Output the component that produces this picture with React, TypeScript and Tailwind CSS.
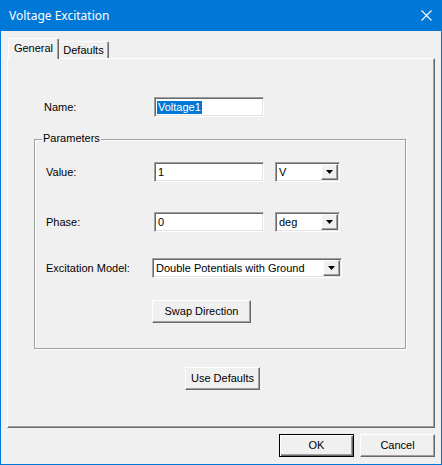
import React from "react";

const ui = "font-['Liberation_Sans',Arial,sans-serif] text-[11px] leading-[13px] text-black";

// sunken 3D edit box (classic windows look)
function Field({ width, children }: { width: string; children?: React.ReactNode }) {
  return (
    <div
      className={`${width} h-[20px] flex items-stretch p-[1px] bg-white border border-t-[#a0a0a0] border-l-[#a0a0a0] border-r-white border-b-white shadow-[inset_1px_1px_0_#696969,inset_-1px_-1px_0_#e3e3e3]`}
    >
      {children}
    </div>
  );
}

function Combo({ width, value }: { width: string; value: string }) {
  return (
    <Field width={width}>
      <div className="flex-1 flex items-center pl-[2px] whitespace-nowrap overflow-hidden">{value}</div>
      <div className="w-[17px] flex items-center justify-center bg-[#f0f0f0] border border-t-white border-l-white border-r-[#696969] border-b-[#696969] shadow-[inset_-1px_-1px_0_#a0a0a0]">
        <svg width="7" height="4" viewBox="0 0 7 4">
          <path d="M0 0h7L3.5 4z" fill="#000" />
        </svg>
      </div>
    </Field>
  );
}

function Button({ width, label, isDefault }: { width: string; label: string; isDefault?: boolean }) {
  const edge = isDefault
    ? "border border-black shadow-[inset_1px_1px_0_white,inset_-1px_-1px_0_#696969,inset_-2px_-2px_0_#a0a0a0]"
    : "border border-t-white border-l-white border-r-[#696969] border-b-[#696969] shadow-[inset_-1px_-1px_0_#a0a0a0]";
  return (
    <div className={`${width} h-[23px] flex items-center justify-center bg-[#f0f0f0] ${edge}`}>
      {label}
    </div>
  );
}

export default function App() {
  return (
    <div className={`w-[442px] h-[465px] flex flex-col bg-[#f0f0f0] border-x border-b border-[#0078d7] ${ui}`}>
      {/* title bar */}
      <div className="h-[31px] shrink-0 flex items-center justify-between bg-[#0078d7] pl-[8px] pr-[9px] text-white">
        <span className="font-['Noto_Sans',sans-serif] text-[12px] leading-[16px]">Voltage Excitation</span>
        <svg width="11" height="11" viewBox="0 0 11 11">
          <path d="M0.5 0.5L10.5 10.5M10.5 0.5L0.5 10.5" stroke="#fff" strokeWidth="1.1" />
        </svg>
      </div>

      <div className="px-[6px] pt-[7px]">
        {/* tabs */}
        <div className="relative z-10 h-[21px] -mb-[1px] flex items-end pl-[1px]">
          <div className="w-[51px] h-[21px] flex items-start justify-center pt-[3px] bg-[#f0f0f0] border-t border-l border-r border-t-white border-l-white border-r-[#696969] rounded-t-[2px] shadow-[inset_-1px_0_0_#a0a0a0]">
            General
          </div>
          <div className="w-[50px] h-[17px] mb-[1px] flex items-center justify-center bg-[#f0f0f0] border-t border-r border-t-white border-r-[#696969] rounded-t-[2px] shadow-[inset_-1px_0_0_#a0a0a0]">
            Defaults
          </div>
        </div>

        {/* tab page */}
        <div className="w-[428px] h-[370px] flex flex-col border border-t-white border-l-white border-r-[#696969] border-b-[#696969] shadow-[inset_-1px_-1px_0_#a0a0a0]">
          <div className="mt-[38px] flex items-center pl-[36px]">
            <div className="w-[110px]">Name:</div>
            <Field width="w-[110px]">
              <div className="flex items-center pl-[1px]">
                <span className="bg-[#0078d7] text-white px-[1px]">Voltage1</span>
              </div>
            </Field>
          </div>

          {/* Parameters group */}
          <div className="relative mt-[22px] ml-[26px] w-[372px] h-[210px] flex flex-col border border-[#a0a0a0] shadow-[inset_1px_1px_0_white,1px_1px_0_white]">
            <span className="absolute top-[-8px] left-[7px] px-[1px] bg-[#f0f0f0]">Parameters</span>

            <div className="mt-[22px] flex items-center pl-[11px]">
              <div className="w-[108px]">Value:</div>
              <Field width="w-[110px]">
                <div className="flex items-center pl-[2px]">1</div>
              </Field>
              <div className="ml-[11px]">
                <Combo width="w-[65px]" value="V" />
              </div>
            </div>

            <div className="mt-[30px] flex items-center pl-[11px]">
              <div className="w-[108px]">Phase:</div>
              <Field width="w-[110px]">
                <div className="flex items-center pl-[2px]">0</div>
              </Field>
              <div className="ml-[11px]">
                <Combo width="w-[65px]" value="deg" />
              </div>
            </div>

            <div className="mt-[26px] flex items-center pl-[11px]">
              <div className="w-[106px]">Excitation Model:</div>
              <Combo width="w-[190px]" value="Double Potentials with Ground" />
            </div>

            <div className="mt-[22px] ml-[117px]">
              <Button width="w-[99px]" label="Swap Direction" />
            </div>
          </div>

          <div className="mt-[18px] ml-[177px]">
            <Button width="w-[75px]" label="Use Defaults" />
          </div>
        </div>

        {/* dialog buttons */}
        <div className="mt-[6px] flex justify-end gap-[6px]">
          <Button width="w-[75px]" label="OK" isDefault />
          <Button width="w-[75px]" label="Cancel" />
        </div>
      </div>
    </div>
  );
}
